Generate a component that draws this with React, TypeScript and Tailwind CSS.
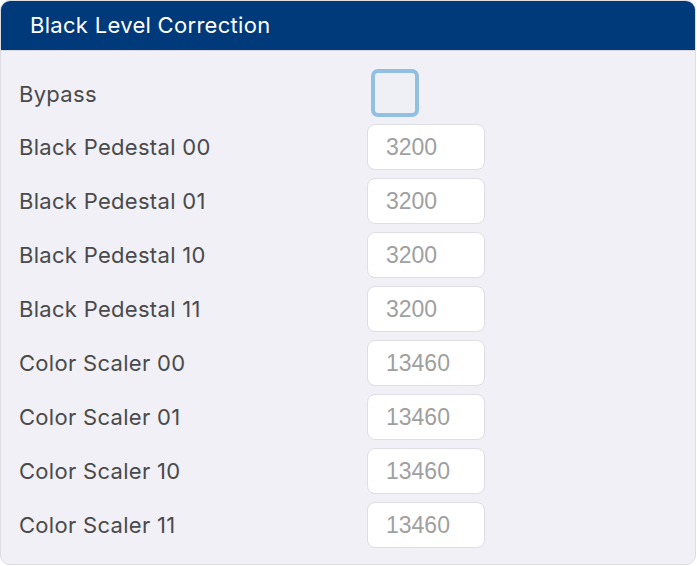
const ROWS: { label: string; value: string }[] = [
  { label: "Black Pedestal 00", value: "3200" },
  { label: "Black Pedestal 01", value: "3200" },
  { label: "Black Pedestal 10", value: "3200" },
  { label: "Black Pedestal 11", value: "3200" },
  { label: "Color Scaler 00", value: "13460" },
  { label: "Color Scaler 01", value: "13460" },
  { label: "Color Scaler 10", value: "13460" },
  { label: "Color Scaler 11", value: "13460" },
];

export default function App() {
  return (
    <div className="w-[697px] h-[566px] bg-white font-['Inter',sans-serif]">
      <div className="w-[696px] h-[565px] rounded-[10px] border border-[#dcdce2] bg-[#f0f0f6] overflow-hidden flex flex-col">
        {/* Header */}
        <div className="h-[50px] shrink-0 bg-[#003a7a] border-b border-[#d8d8de] flex items-center pl-[29px]">
          <h2 className="text-white text-[22px] font-normal tracking-[0.3px]">Black Level Correction</h2>
        </div>

        {/* Body */}
        <div className="flex flex-col gap-2 pt-[19px] pl-[18px]">
          <div className="flex items-center h-[46px]">
            <span className="w-[348px] text-[22px] tracking-[0.3px] text-[#4a4a4a] pt-[2px]">Bypass</span>
            <div className="ml-[4px] w-[48px] h-[48px] rounded-[7px] border-[4px] border-[#92c0e3] bg-[#eef0f6]" />
          </div>

          {ROWS.map((r) => (
            <div key={r.label} className="flex items-center h-[46px]">
              <span className="w-[348px] text-[22px] tracking-[0.3px] text-[#4a4a4a] pt-[1px]">{r.label}</span>
              <div className="w-[118px] h-[46px] rounded-[8px] border border-[#dedee4] bg-white flex items-center pl-[18px]">
                <span className="font-['Liberation_Sans',sans-serif] text-[23px] text-[#a0a0a0]">{r.value}</span>
              </div>
            </div>
          ))}
        </div>
      </div>
    </div>
  );
}
